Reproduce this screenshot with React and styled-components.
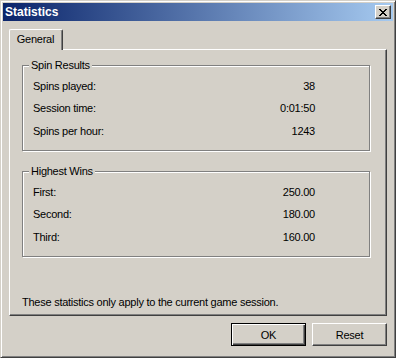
import React from "react";
import styled, { createGlobalStyle } from "styled-components";

const Global = createGlobalStyle`
  html, body { margin: 0; padding: 0; background: #d4d0c8; }
  body { font-family: "Liberation Sans", Arial, sans-serif; font-size: 11px; letter-spacing: -0.25px; color: #000; }
  * { box-sizing: border-box; }
`;

const Window = styled.div`
  width: 396px;
  height: 358px;
  background: #d4d0c8;
  border: 1px solid;
  border-color: #d4d0c8 #404040 #404040 #d4d0c8;
  box-shadow: inset 1px 1px 0 #ffffff, inset -1px -1px 0 #808080;
  padding: 2px;
  display: flex;
  flex-direction: column;
`;

const TitleBar = styled.div`
  height: 18px;
  background: linear-gradient(to right, #0a246a, #a6caf0);
  display: flex;
  align-items: center;
  padding-left: 2px;
  padding-right: 2px;
`;

const Title = styled.span`
  flex: 1;
  color: #fff;
  font-weight: bold;
  font-size: 12px;
  letter-spacing: 0;
  line-height: 18px;
`;

const CloseButton = styled.button`
  width: 16px;
  height: 14px;
  padding: 0;
  margin: 0;
  background: #d4d0c8;
  border: 1px solid;
  border-color: #ffffff #404040 #404040 #ffffff;
  box-shadow: inset -1px -1px 0 #808080;
  display: flex;
  align-items: center;
  justify-content: center;
`;

const Body = styled.div`
  flex: 1;
  display: flex;
  flex-direction: column;
  padding: 8px 6px 0 6px;
`;

const TabStrip = styled.div`
  display: flex;
  height: 20px;
  align-items: flex-end;
`;

const Tab = styled.div`
  position: relative;
  z-index: 1;
  width: 54px;
  height: 21px;
  margin-bottom: -1px;
  background: #d4d0c8;
  border-top: 1px solid #ffffff;
  border-left: 1px solid #ffffff;
  border-right: 1px solid #404040;
  border-radius: 2px 2px 0 0;
  box-shadow: inset -1px 0 0 #808080;
  display: flex;
  align-items: center;
  justify-content: center;
  padding-bottom: 2px;
  padding-right: 1px;
`;

const Panel = styled.div`
  height: 267px;
  border: 1px solid;
  border-color: #ffffff #404040 #404040 #ffffff;
  box-shadow: inset -1px -1px 0 #808080;
  padding: 15px 0 0 12px;
  display: flex;
  flex-direction: column;
`;

const GroupBox = styled.div`
  position: relative;
  width: 348px;
  height: 86px;
  margin-top: ${(p) => p.$gap || 0}px;
  border: 1px solid #808080;
  box-shadow: inset 1px 1px 0 #ffffff, 1px 1px 0 #ffffff;
  padding: 9px 54px 0 10px;
`;

const Caption = styled.span`
  position: absolute;
  top: -7px;
  left: 6px;
  padding: 0 2px 0 2px;
  background: #d4d0c8;
  line-height: 13px;
`;

const Rows = styled.div`
  display: grid;
  grid-template-columns: 1fr auto;
  grid-auto-rows: 22.5px;
  align-items: center;
`;

const Label = styled.span`
  line-height: 13px;
`;

const Value = styled.span`
  line-height: 13px;
  text-align: right;
`;

const Note = styled.div`
  margin-top: auto;
  padding-bottom: 6px;
  line-height: 13px;
`;

const ButtonRow = styled.div`
  display: flex;
  justify-content: flex-end;
  gap: 6px;
  margin-top: 7px;
`;

const Button = styled.button`
  width: 75px;
  height: 23px;
  padding: 0;
  margin: 0;
  font-family: "Liberation Sans", Arial, sans-serif;
  font-size: 11px;
  letter-spacing: -0.25px;
  color: #000;
  background: #d4d0c8;
  border: 1px solid;
  border-color: ${(p) => (p.$default ? "#000 #000 #000 #000" : "#ffffff #404040 #404040 #ffffff")};
  box-shadow: ${(p) =>
    p.$default
      ? "inset 1px 1px 0 #ffffff, inset -1px -1px 0 #404040, inset -2px -2px 0 #808080"
      : "inset -1px -1px 0 #808080"};
`;

function CloseGlyph() {
  return (
    <svg width="8" height="7" viewBox="0 0 8 7" shapeRendering="crispEdges">
      <path
        d="M0 0h2v1H0zM6 0h2v1H6zM1 1h2v1H1zM5 1h2v1H5zM2 2h4v1H2zM3 3h2v1H3zM2 4h4v1H2zM1 5h2v1H1zM5 5h2v1H5zM0 6h2v1H0zM6 6h2v1H6z"
        fill="#000"
      />
    </svg>
  );
}

const spinRows = [
  ["Spins played:", "38"],
  ["Session time:", "0:01:50"],
  ["Spins per hour:", "1243"],
];

const winRows = [
  ["First:", "250.00"],
  ["Second:", "180.00"],
  ["Third:", "160.00"],
];

function Group({ caption, rows, gap }) {
  return (
    <GroupBox $gap={gap}>
      <Caption>{caption}</Caption>
      <Rows>
        {rows.map(([l, v]) => (
          <React.Fragment key={l}>
            <Label>{l}</Label>
            <Value>{v}</Value>
          </React.Fragment>
        ))}
      </Rows>
    </GroupBox>
  );
}

export default function App() {
  return (
    <>
      <Global />
      <Window>
        <TitleBar>
          <Title>Statistics</Title>
          <CloseButton aria-label="Close">
            <CloseGlyph />
          </CloseButton>
        </TitleBar>
        <Body>
          <TabStrip>
            <Tab>General</Tab>
          </TabStrip>
          <Panel>
            <Group caption="Spin Results" rows={spinRows} />
            <Group caption="Highest Wins" rows={winRows} gap={20} />
            <Note>These statistics only apply to the current game session.</Note>
          </Panel>
          <ButtonRow>
            <Button $default>OK</Button>
            <Button>Reset</Button>
          </ButtonRow>
        </Body>
      </Window>
    </>
  );
}
